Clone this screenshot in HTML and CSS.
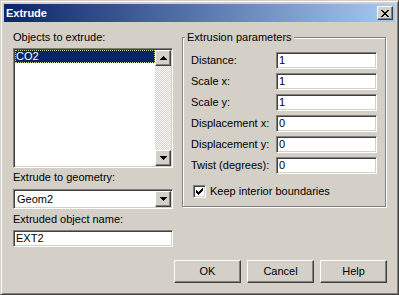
FILE: index.html
```html
<!DOCTYPE html>
<html lang="en">
<head>
    <meta charset="UTF-8">
    <title>Extrude</title>
    <link rel="stylesheet" href="styles.css">
</head>
<body>
    <div class="window">
        <div class="titlebar">
            <span class="title">Extrude</span>
            <div class="close">
                <svg width="8" height="7" viewBox="0 0 8 7" shape-rendering="crispEdges"><path d="M0 0h2v1H0zM6 0h2v1H6zM1 1h2v1H1zM5 1h2v1H5zM2 2h4v1H2zM3 3h2v1H3zM2 4h4v1H2zM1 5h2v1H1zM5 5h2v1H5zM0 6h2v1H0zM6 6h2v1H6z"/></svg>
            </div>
        </div>
        <div class="content">
            <div class="panes">
                <div class="left">
                    <div class="label">Objects to extrude:</div>
                    <div class="listbox sunken">
                        <div class="items">
                            <div class="item selected">CO2</div>
                        </div>
                        <div class="vscroll">
                            <div class="sbtn raised">
                                <svg width="7" height="4" viewBox="0 0 7 4" shape-rendering="crispEdges"><path d="M3 0h1v1H3zM2 1h3v1H2zM1 2h5v1H1zM0 3h7v1H0z"/></svg>
                            </div>
                            <div class="track"></div>
                            <div class="sbtn raised">
                                <svg width="7" height="4" viewBox="0 0 7 4" shape-rendering="crispEdges"><path d="M0 0h7v1H0zM1 1h5v1H1zM2 2h3v1H2zM3 3h1v1H3z"/></svg>
                            </div>
                        </div>
                    </div>
                    <div class="label label-gap">Extrude to geometry:</div>
                    <div class="combo sunken">
                        <span class="combo-text">Geom2</span>
                        <div class="sbtn raised">
                            <svg width="7" height="4" viewBox="0 0 7 4" shape-rendering="crispEdges"><path d="M0 0h7v1H0zM1 1h5v1H1zM2 2h3v1H2zM3 3h1v1H3z"/></svg>
                        </div>
                    </div>
                    <div class="label">Extruded object name:</div>
                    <div class="edit sunken">EXT2</div>
                </div>
                <fieldset class="group">
                    <legend>Extrusion parameters</legend>
                    <div class="rows">
                        <div class="row"><span class="row-label">Distance:</span><div class="edit sunken">1</div></div>
                        <div class="row"><span class="row-label">Scale x:</span><div class="edit sunken">1</div></div>
                        <div class="row"><span class="row-label">Scale y:</span><div class="edit sunken">1</div></div>
                        <div class="row"><span class="row-label">Displacement x:</span><div class="edit sunken">0</div></div>
                        <div class="row"><span class="row-label">Displacement y:</span><div class="edit sunken">0</div></div>
                        <div class="row"><span class="row-label">Twist (degrees):</span><div class="edit sunken">0</div></div>
                    </div>
                    <div class="check-row">
                        <span class="checkbox sunken">
                            <svg width="7" height="7" viewBox="0 0 7 7" shape-rendering="crispEdges"><path d="M6 0h1v3H6zM5 1h1v3H5zM4 2h1v3H4zM3 3h1v3H3zM2 4h1v3H2zM1 3h1v3H1zM0 2h1v3H0z"/></svg>
                        </span>
                        <span>Keep interior boundaries</span>
                    </div>
                </fieldset>
            </div>
            <div class="buttons">
                <div class="button raised">OK</div>
                <div class="button raised">Cancel</div>
                <div class="button raised">Help</div>
            </div>
        </div>
    </div>
</body>
</html>
```

FILE: styles.css
```css
* {
    box-sizing: border-box;
}

body {
    margin: 0;
    font-family: "Liberation Sans", Arial, sans-serif;
    font-size: 11px;
    line-height: 13px;
    color: #000;
    background-color: #d4d0c8;
}

.window {
    width: 399px;
    height: 295px;
    padding: 3px;
    border: 1px solid;
    border-color: #d4d0c8 #404040 #404040 #d4d0c8;
    box-shadow: inset 1px 1px #fff, inset -1px -1px #808080;
    background-color: #d4d0c8;
}

.titlebar {
    height: 18px;
    display: flex;
    align-items: center;
    justify-content: space-between;
    padding: 0 2px;
    background: linear-gradient(to right, #0a246a, #a6caf0);
}

.title {
    color: #fff;
    font-weight: bold;
}

.close {
    width: 16px;
    height: 14px;
    display: flex;
    align-items: center;
    justify-content: center;
    padding-right: 1px;
    background-color: #d4d0c8;
    border: 1px solid;
    border-color: #fff #404040 #404040 #fff;
    box-shadow: inset -1px -1px #808080;
}

/* 3D borders */
.raised {
    background-color: #d4d0c8;
    border: 1px solid;
    border-color: #fff #404040 #404040 #fff;
    box-shadow: inset -1px -1px #808080;
}

.sunken {
    background-color: #fff;
    border: 1px solid;
    border-color: #808080 #fff #fff #808080;
    box-shadow: inset 1px 1px #404040, inset -1px -1px #d4d0c8;
}

.content {
    padding: 9px 8px 0 9px;
}

.panes {
    display: flex;
    align-items: flex-start;
    gap: 9px;
}

.left {
    width: 160px;
    display: flex;
    flex-direction: column;
}

.label {
    margin-bottom: 4px;
}

.label-gap {
    margin-bottom: 5px;
}

.listbox {
    height: 120px;
    padding: 1px;
    margin-bottom: 3px;
    display: flex;
}

.items {
    flex: 1;
}

.item {
    height: 13px;
    padding-left: 1px;
}

.selected {
    background-color: #0a246a;
    color: #fff;
    outline: 1px dotted #c8c890;
    outline-offset: -1px;
}

.vscroll {
    width: 16px;
    display: flex;
    flex-direction: column;
}

.sbtn {
    width: 16px;
    height: 16px;
    flex: none;
    display: flex;
    align-items: center;
    justify-content: center;
}

.track {
    flex: 1;
    background: repeating-conic-gradient(#fff 0 25%, #d4d0c8 0 50%) 0 0 / 2px 2px;
}

.combo {
    height: 20px;
    padding: 1px;
    margin-bottom: 4px;
    display: flex;
}

.combo-text {
    flex: 1;
    padding-left: 2px;
    line-height: 16px;
}

.edit {
    height: 17px;
    padding: 1px 2px;
    line-height: 13px;
}

.group {
    width: 204px;
    flex: none;
    margin: 0;
    padding: 8px 8px 8px 8px;
    min-width: 0;
    border: 1px solid #808080;
    box-shadow: inset 1px 1px #fff, 1px 1px #fff;
}

.group legend {
    margin-left: -6px;
    padding: 0 2px;
    line-height: 13px;
    background-color: #d4d0c8;
}

.rows {
    display: flex;
    flex-direction: column;
    gap: 4px;
}

.row {
    display: flex;
    align-items: center;
}

.row-label {
    width: 85px;
}

.row .edit {
    width: 101px;
}

.check-row {
    display: flex;
    align-items: center;
    gap: 4px;
    height: 13px;
    margin-top: 11px;
    padding-left: 2px;
}

.checkbox {
    width: 13px;
    height: 13px;
    display: flex;
    align-items: center;
    justify-content: center;
}

.buttons {
    display: flex;
    justify-content: flex-end;
    gap: 6px;
    margin-top: 13px;
}

.button {
    width: 67px;
    height: 23px;
    display: flex;
    align-items: center;
    justify-content: center;
}
```
